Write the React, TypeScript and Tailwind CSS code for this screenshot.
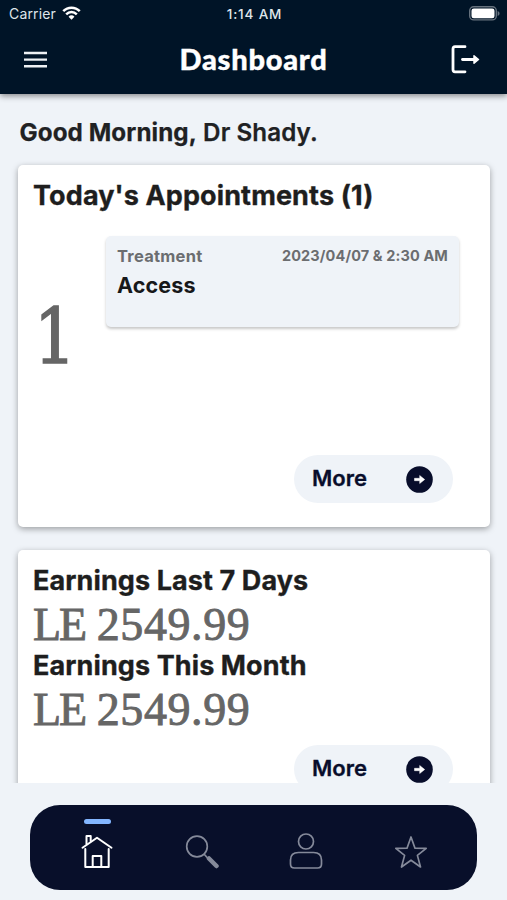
import React from "react";

function StatusBar() {
  return (
    <div className="grid h-7 grid-cols-3 items-center pl-[9px] pr-[7px] font-['Inter',sans-serif] text-[14px] text-[#dfe5ea]">
      <div className="-mt-[2px] flex items-center gap-[6px]">
        <span className="tracking-[0.15px]">Carrier</span>
        <svg width="19" height="15" viewBox="0 0 20 15" fill="none" stroke="#fff" strokeWidth="2.6">
          <path d="M1.3 5.1C6.2.1 13.8.1 18.7 5.1" />
          <path d="M4.4 8.3c3.2-3.2 8-3.2 11.2 0" />
          <path d="M6.9 10.8c1.8-1.8 4.400-1.8 6.2 0L10 14z" fill="#fff" stroke="none" />
        </svg>
      </div>
      <span className="text-center text-[13.5px] font-medium tracking-[0.85px]">1:14 AM</span>
      <svg className="-mt-[2px] justify-self-end" width="31" height="15" viewBox="0 0 31 15">
        <rect x=".7" y=".7" width="26.6" height="13.2" rx="4" fill="none" stroke="#66727e" strokeWidth="1.4" />
        <rect x="2.5" y="2.4" width="23" height="9.8" rx="2.3" fill="#fff" />
        <path d="M28.6 5v5c2.6-.8 2.6-4.200 0-5z" fill="#66727e" />
      </svg>
    </div>
  );
}

function MoreButton() {
  return (
    <button className="flex h-12 w-[159px] shrink-0 items-center justify-between rounded-full bg-[#eff3f8] pl-[18px] pr-5 text-[#080d2b]">
      <span className="-mt-[2px] font-['Inter',sans-serif] text-[22px] font-semibold [-webkit-text-stroke:0.3px_#080d2b]">More</span>
      <svg width="27" height="27" viewBox="0 0 27 27">
        <circle cx="13.5" cy="13.5" r="13.3" fill="#080d2b" />
        <path d="M8.500 12.300h5.200V9.500l5 4-5 4v-2.800H8.500z" fill="#fff" stroke="#fff" strokeWidth=".5" strokeLinejoin="round" />
      </svg>
    </button>
  );
}

function Amount({ currency, value }: { currency: string; value: string }) {
  return (
    <p className="-mt-px mb-px h-[47px] whitespace-nowrap font-['Liberation_Serif',serif] text-[46px] leading-[47px] text-[#666] [-webkit-text-stroke:0.9px_#666]">
      <span className="tracking-[-2px]">{currency}</span> <span className="tracking-[0.6px]">{value}</span>
    </p>
  );
}

const heading =
  "whitespace-nowrap font-bold text-[#1e1e1e] text-[27px] leading-[34px] [-webkit-text-stroke:0.35px_#1e1e1e]";

export default function App() {
  return (
    <div className="flex h-[900px] w-[507px] flex-col overflow-hidden bg-[#eff3f8] font-['Inter',sans-serif]">
      <header className="z-10 h-[94px] shrink-0 bg-[#001427] shadow-[0_2px_6px_rgba(0,0,0,0.45)]">
        <StatusBar />
        <div className="flex h-[64px] items-center justify-between pl-6 pr-[27px]">
          <svg className="-mt-px" width="23" height="17" viewBox="0 0 23 17" stroke="#eef1f4" strokeWidth="2.4">
            <path d="M0 2h23M0 8.600h23M0 15.200h23" />
          </svg>
          <h1 className="-mt-[2px] ml-[9px] font-['Lato',sans-serif] text-[29px] font-black leading-9 tracking-[0.75px] text-white [-webkit-text-stroke:0.4px_#fff]">Dashboard</h1>
          <svg className="-mt-px" width="29" height="29" viewBox="0 0 29 29" fill="none" stroke="#fff" strokeWidth="2.8" strokeLinecap="round" strokeLinejoin="round">
            <path d="M14 1.700H4Q2 1.700 2 4v20.500q0 2.300 2 2.300h10" />
            <path d="M11.500 14.500H24" />
            <path d="M23 10.800v7.400l4.500-3.700z" fill="#fff" strokeWidth="1.500" />
          </svg>
        </div>
      </header>

      <main className="h-[689px] shrink-0 overflow-hidden px-[18px]">
        <p className="h-[71px] whitespace-nowrap pl-[1.500px] pt-6 text-[24.2px] font-semibold leading-[30px] tracking-[0.09px] text-[#202123] [-webkit-text-stroke:0.25px_#202123]">
          <span className="font-bold">Good Morning,</span> Dr Shady.
        </p>

        <section className="flex h-[362px] w-[472px] flex-col rounded-[5px] bg-white pl-[15px] pt-[14px] shadow-[0_2px_6px_rgba(0,0,0,0.35)]">
          <h2 className={heading + " h-[57px] tracking-[0.13px]"}>Today's Appointments (1)</h2>
          <div className="flex h-[219px] shrink-0">
            <span className="w-[73px] pl-px pt-[55px] font-['DejaVu_Serif_Condensed','DejaVu_Serif',serif] text-[77px] leading-[92px] text-[#666]">
              <span className="inline-block origin-left scale-x-95 [-webkit-text-stroke:1.5px_#666]">1</span>
            </span>
            <div className="h-[91px] w-[353px] rounded-[5px] bg-[#eff3f8] px-[11px] pt-[10px] shadow-[0_2px_3px_rgba(0,0,0,0.22)]">
              <div className="flex items-center justify-between text-[#6b6d70]">
                <span className="text-[16.500px] font-bold leading-5 tracking-[0.25px]">Treatment</span>
                <span className="text-[14.500px] font-bold leading-5 tracking-[0.12px]">2023/04/07 &amp; 2:30 AM</span>
              </div>
              <p className="mt-[5px] text-[21.500px] font-bold leading-[28px] tracking-[0.15px] text-[#17181a]">Access</p>
            </div>
          </div>
          <div className="mr-[37px] flex justify-end">
            <MoreButton />
          </div>
        </section>

        <section className="mt-[23px] flex h-[362px] w-[472px] flex-col rounded-[5px] bg-white pl-[15px] pt-[14px] shadow-[0_2px_6px_rgba(0,0,0,0.35)]">
          <h2 className={heading + " h-[38px] tracking-[0.1px]"}>Earnings Last 7 Days</h2>
          <Amount currency="LE" value="2549.99" />
          <h2 className={heading + " h-[38px] tracking-[0.1px]"}>Earnings This Month</h2>
          <Amount currency="LE" value="2549.99" />
          <div className="mr-[37px] mt-[11px] flex justify-end">
            <MoreButton />
          </div>
        </section>
      </main>

      <nav className="mx-auto mt-[22px] flex h-[85px] w-[447px] shrink-0 rounded-[30px] bg-[#080f2a]">
        <div className="flex w-[134px] flex-col items-center pt-[14px]">
          <span className="h-[5px] w-[27px] rounded-full bg-[#83b6ff]" />
          <svg className="mt-[10px]" width="32" height="36" viewBox="0 0 32 36" fill="none" stroke="#fff" strokeWidth="2" strokeLinecap="round" strokeLinejoin="round">
            <path d="M1.500 13.700 16 3.700l14.500 10" />
            <path d="M5.500 10V2h4.200v5" />
            <path d="M4.300 15v18h23.400V15" />
            <path d="M11.700 33V22h8.600v11" />
          </svg>
        </div>
        <div className="flex w-[75px] justify-center pt-[29px]">
          <svg width="34" height="36" viewBox="0 0 34 36" fill="none" stroke="#858a9a" strokeWidth="1.700">
            <circle cx="12" cy="12.500" r="10.300" />
            <path d="m19 20 4 4.500" />
            <path d="m24 24.500 7.500 7.500" strokeWidth="4.500" strokeLinecap="round" />
          </svg>
        </div>
        <div className="flex w-[134px] justify-center pt-[27px]">
          <svg width="36" height="38" viewBox="0 0 36 38" fill="none" stroke="#858a9a" strokeWidth="1.700">
            <circle cx="18" cy="9.500" r="7.500" />
            <path d="M10.500 20.500h15q8 0 8 7.500v4q0 4-4 4h-23q-4 0-4-4v-4q0-7.500 8-7.500z" />
          </svg>
        </div>
        <div className="flex w-[75px] justify-center pt-[29px]">
          <svg width="34" height="36" viewBox="0 0 34 36" fill="none" stroke="#858a9a" strokeWidth="1.700" strokeLinejoin="round">
            <path d="m17 3 4 11.200 11.200.2-8.800 7L26.500 33 17 26.200 7.500 33l3.100-11.600-8.800-7 11.200-.2z" />
          </svg>
        </div>
      </nav>
    </div>
  );
}
